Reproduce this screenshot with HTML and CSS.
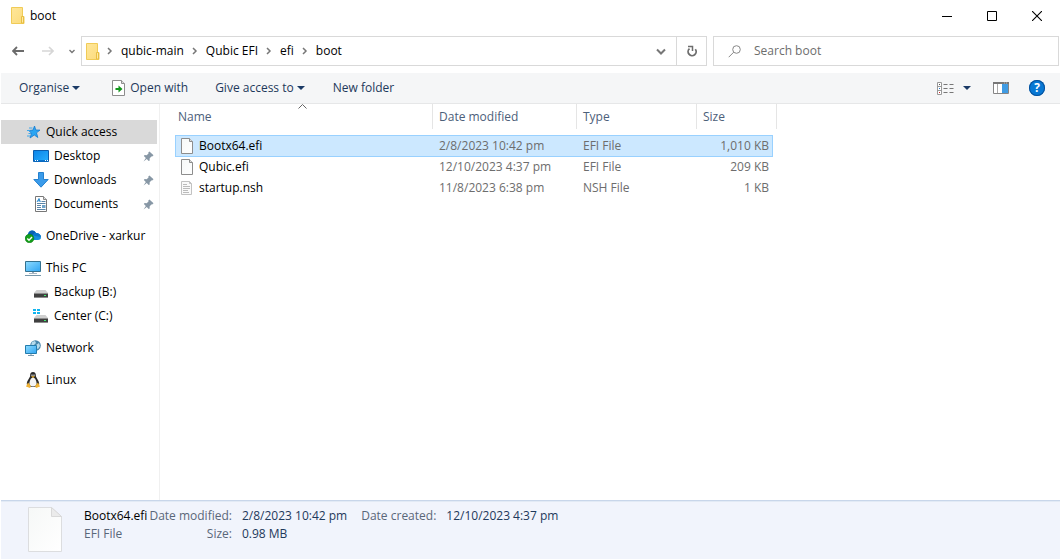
FILE: index.html
```html
<!DOCTYPE html>
<html lang="en">
<head>
<meta charset="utf-8">
<title>boot</title>
<link rel="stylesheet" href="styles.css">
</head>
<body>
<svg class="defs" aria-hidden="true">
  <defs>
    <linearGradient id="fold" x1="0" y1="0" x2="1" y2="1"><stop offset="0" stop-color="#ffe79a"/><stop offset="1" stop-color="#fbdb7c"/></linearGradient>
    <linearGradient id="blue" x1="0" y1="0" x2="1" y2="1"><stop offset="0" stop-color="#0b84e8"/><stop offset="1" stop-color="#27b0ff"/></linearGradient>
    <linearGradient id="screen" x1="0" y1="0" x2="1" y2="1"><stop offset="0" stop-color="#8fdcff"/><stop offset="1" stop-color="#2fa4f2"/></linearGradient>
    <linearGradient id="paper" x1="0" y1="0" x2="1" y2="1"><stop offset="0" stop-color="#f6f8f7"/><stop offset="1" stop-color="#fff"/></linearGradient>
    <symbol id="i-folder" viewBox="0 0 14 17"><path d="M.5.5h11v9h1.5v7H.5z" fill="url(#fold)" stroke="#f0cb57"/><path d="M10.500 16v-6.500h2V16z" fill="#ffe9a4" stroke="#e8bf42"/></symbol>
    <symbol id="i-chev" viewBox="0 0 6 8"><path d="M1 1l3 3-3 3" fill="none" stroke="#777" stroke-width="1.5"/></symbol>
    <symbol id="i-tri" viewBox="0 0 8 4"><path d="M0 0h8L4 4z" fill="#1b3a66"/></symbol>
    <symbol id="i-pin" viewBox="0 0 12 12"><path d="M7 .5L11.500 4.500 10 6 9 5.900 7.200 8.100 7.300 10.300 6.200 11 4.100 8.600.6 11.500 3.100 7.600.9 5.400 1.800 4.400 4 4.500 6 2.800 5.800 1.500z" fill="#8797a5"/></symbol>
    <symbol id="i-file" viewBox="0 0 12 16"><path d="M.5.5h8l3 3v12H.5z" fill="url(#paper)" stroke="#8d8d8d"/><path d="M8.500.5v3h3" fill="#ddd" stroke="#8d8d8d"/></symbol>
    <symbol id="i-drive" viewBox="0 0 14 8"><path d="M2.500 0h9L14 3H0z" fill="#cfcfcf"/><path d="M0 3h14v4H0z" fill="#404040"/><path d="M0 3h14v1H0zM0 7h14v1H0z" fill="#8d8d8d"/><path d="M10 5h2v1h-2z" fill="#3df06c"/></symbol>
  </defs>
</svg>
<div class="window">
  <header class="titlebar">
    <svg class="folder" width="14" height="17"><use href="#i-folder"/></svg>
    <h1 class="title">boot</h1>
    <button class="winbtn" aria-label="Minimise"><svg width="10" height="10"><path d="M0 5.500h10" stroke="#000"/></svg></button>
    <button class="winbtn" aria-label="Maximise"><svg width="10" height="10"><path d="M.5.5h9v9h-9z" fill="none" stroke="#000"/></svg></button>
    <button class="winbtn" aria-label="Close"><svg width="10" height="10"><path d="M0 0l10 10M10 0L0 10" stroke="#000" stroke-width="1.100"/></svg></button>
  </header>

  <div class="navbar">
    <button class="navbtn" aria-label="Back"><svg width="12" height="10"><path d="M5 1L1 5l4 4M1 5h11" fill="none" stroke="#6b6b6b" stroke-width="1.800"/></svg></button>
    <button class="navbtn" aria-label="Forward"><svg width="12" height="10"><path d="M7 1l4 4-4 4M11 5H0" fill="none" stroke="#d6d6d6" stroke-width="1.700"/></svg></button>
    <button class="recent" aria-label="Recent locations"><svg width="6" height="5"><path d="M.5 1L3 3.500 5.500 1" fill="none" stroke="#777" stroke-width="1.400"/></svg></button>
    <nav class="address" aria-label="Address">
      <svg class="folder" width="14" height="17"><use href="#i-folder"/></svg>
      <svg class="chev" width="6" height="8"><use href="#i-chev"/></svg><a href="#">qubic-main</a>
      <svg class="chev" width="6" height="8"><use href="#i-chev"/></svg><a href="#">Qubic EFI</a>
      <svg class="chev" width="6" height="8"><use href="#i-chev"/></svg><a href="#">efi</a>
      <svg class="chev" width="6" height="8"><use href="#i-chev"/></svg><a href="#">boot</a>
      <button class="drop" aria-label="Previous locations"><svg width="10" height="7"><path d="M1 1.500l4 4 4-4" fill="none" stroke="#777" stroke-width="2"/></svg></button>
      <button class="refresh" aria-label="Refresh"><svg width="10" height="12"><path d="M8.300 4.200A4 4 0 1 1 2.500 3.600" fill="none" stroke="#6d6d6d" stroke-width="1.800"/><path d="M1 1.500h4.500v4.500" fill="none" stroke="#6d6d6d" stroke-width="1.500"/></svg></button>
    </nav>
    <label class="search">
      <svg width="13" height="13"><circle cx="8.500" cy="4.500" r="3.800" fill="none" stroke="#888"/><path d="M5.700 7.200L.700 12.200" stroke="#888"/></svg>
      <input type="text" placeholder="Search boot" aria-label="Search boot">
    </label>
  </div>

  <div class="toolbar">
    <button class="organise">Organise <svg width="8" height="4"><use href="#i-tri"/></svg></button>
    <button class="openwith"><svg width="13" height="16"><path d="M.5.5h9l3 3v12H.5z" fill="#fff" stroke="#8d8d8d"/><path d="M9.500.5v3h3" fill="#ddd" stroke="#8d8d8d"/><path d="M3.500 8h3V5.500L10.500 9l-4 3.500V10h-3z" fill="#12961b"/></svg> Open with</button>
    <button class="access">Give access to <svg width="8" height="4"><use href="#i-tri"/></svg></button>
    <button class="newfolder">New folder</button>
    <span class="spacer"></span>
    <button class="view" aria-label="Change view"><svg width="17" height="13"><path d="M.5.5h4v12h-4zM.5 4.500h4M.5 8.500h4" fill="#fff" stroke="#999"/><path d="M2 2h1v1H2z" fill="#555"/><path d="M2 6h1v1H2z" fill="#2878c8"/><path d="M2 10h1v1H2z" fill="#d02020"/><path d="M6.500 2.500h4m2 0h4m-10 4h4m2 0h4m-10 4h4m2 0h4" stroke="#777"/></svg><svg width="8" height="4"><use href="#i-tri"/></svg></button>
    <button class="pane" aria-label="Preview pane"><svg width="16" height="12"><path d="M.5.5h15v11H.5z" fill="#fff" stroke="#858585"/><path d="M0 0h16v2H0z" fill="#777"/><path d="M11 1h1M13 1h1" stroke="#fff" stroke-width=".5"/><path d="M4.500 2v9" stroke="#aaa"/><path d="M9 2h6v9H9z" fill="#3f9be3"/></svg></button>
    <button class="help" aria-label="Help">?</button>
  </div>

  <main class="main">
    <nav class="side" aria-label="Folders">
      <ul class="group">
        <li class="item active"><svg width="16" height="14"><path d="M9.500 1l1.300 4 4.200.1-3.500 2.700 1.300 4.700-3.500-2.500-4.300 3 1.500-4.800L3.700 5.500l4.300-.4z" fill="#2aa5f2" stroke="#137bd2" stroke-width=".8"/><path d="M4 3h3.500M2 5.500h3M3.500 8.500h2.500M2 11h3" stroke="#3fa7ea"/></svg><a href="#">Quick access</a></li>
        <li class="item sub"><svg width="16" height="12"><path d="M.5.5h15v11H.5z" fill="url(#blue)" stroke="#0b5cac"/><path d="M1 10h14v1.500H1z" fill="#0873ce"/><path d="M2 10.500h1m1 0h1m7 0h1m1 0h1" stroke="#fff"/></svg><a href="#">Desktop</a><svg class="pin" width="11" height="11"><use href="#i-pin"/></svg></li>
        <li class="item sub"><svg width="16" height="16"><path d="M5.500.5h5v7h4.700L8 15.200.8 7.500h4.700z" fill="#3a9bea" stroke="#2581cf"/></svg><a href="#">Downloads</a><svg class="pin" width="11" height="11"><use href="#i-pin"/></svg></li>
        <li class="item sub"><svg width="16" height="16"><path d="M2.500.5h8l3 3v12h-11z" fill="#fff" stroke="#777"/><path d="M10.500.5v3h3" fill="#ddd" stroke="#888"/><path d="M4 6l2-3.500L7.300 6M5 4.800h2" fill="none" stroke="#2586cd"/><path d="M8.500 5.500h4M4 7.500h8.500m-8.500 2h4M4 11.500h4m-4 2h8.500" stroke="#5a84a8"/><path d="M9 9h3.500v3H9z" fill="#6fa3c9"/></svg><a href="#">Documents</a><svg class="pin" width="11" height="11"><use href="#i-pin"/></svg></li>
      </ul>
      <ul class="group">
        <li class="item"><svg width="16" height="14"><path d="M3 5.500C3.500 1 9 0 11 4c3 0 5 1.800 5 4s-1 3-3 3H3C-1 11 0 6 3 5.500z" fill="#1490df"/><path d="M3 5.500C3.500 1 9 0 11 4c-2 0-2 1-3.500 2.500C6 5.300 4.500 5 3 5.500z" fill="#0861b5"/><path d="M11 4c3 0 5 1.800 5 4L7.500 6.500C8.600 5 9.500 4 11 4z" fill="#0b76cb"/><circle cx="4.500" cy="9.500" r="4.300" fill="#15a01b" stroke="#08760e" stroke-width=".6"/><path d="M2.300 9.500l1.700 1.800 3-3.300" fill="none" stroke="#fff" stroke-width="1.400"/></svg><a href="#">OneDrive - xarkur</a></li>
      </ul>
      <ul class="group">
        <li class="item"><svg width="16" height="15"><path d="M.5.5h15v10H.5z" fill="url(#screen)" stroke="#33718f"/><path d="M7 11h2v1H7z" fill="#9ab"/><path d="M4 12.500h8" stroke="#a8b6c1"/><path d="M0 14.500h16" stroke="#7897aa"/></svg><a href="#">This PC</a></li>
        <li class="item sub"><svg width="16" height="14"><use href="#i-drive" x="1" y="5" width="14" height="8"/></svg><a href="#">Backup (B:)</a></li>
        <li class="item sub"><svg width="16" height="14"><use href="#i-drive" x="1" y="6" width="14" height="8"/><path d="M0 0h7v6H0z" fill="#fff"/><path d="M0 0h3v2H0zM4 0h3v2H4zM0 3h3v2H0zM4 3h3v2H4z" fill="#12b5ef"/></svg><a href="#">Center (C:)</a></li>
      </ul>
      <ul class="group">
        <li class="item"><svg width="16" height="16"><circle cx="10.500" cy="5.500" r="5.300" fill="#4887ad"/><path d="M7 2l3-1 1 2-2 2-3 1zM11 5l3-2 1 3-2 3-2-1z" fill="#b6dbec"/><path d="M.5 5.500h11v8H.5z" fill="url(#screen)" stroke="#237cad"/><path d="M6 14v1M3 15.500h6" stroke="#7897aa"/></svg><a href="#">Network</a></li>
      </ul>
      <ul class="group">
        <li class="item"><svg width="16" height="16"><path d="M8 0c2 0 3 1.500 2.900 4 .2 2 3.300 4.500 3.300 8 0 2-2 3-6.200 3s-6.200-1-6.200-3c0-3.500 3.100-6 3.300-8C5 1.500 6 0 8 0z" fill="#292929"/><path d="M8 5.500c2.300 0 3.600 4 3.600 6s-1.200 3-3.600 3-3.600-1-3.600-3 1.300-6 3.600-6z" fill="#f4f4f4"/><path d="M6.500 2.500h1v1.500h-1zM8.500 2.500h1v1.500h-1z" fill="#fff"/><path d="M6 4.300h4L8 6z" fill="#f5b427"/><path d="M3 10.500l3 3.500-1 1.900L1 14.500zM13 10.500l-3 3.500 1 1.900 4-1.400z" fill="#f0b234"/></svg><a href="#">Linux</a></li>
      </ul>
    </nav>

    <section class="content">
      <table class="files">
        <colgroup><col class="c-name"><col class="c-date"><col class="c-type"><col class="c-size"><col class="c-end"></colgroup>
        <thead>
          <tr>
            <th aria-sort="ascending"><div class="head">Name<svg class="sort" width="9" height="5"><path d="M.5 4.500l4-4 4 4" fill="none" stroke="#666"/></svg></div></th>
            <th><div class="head">Date modified</div></th>
            <th><div class="head">Type</div></th>
            <th colspan="2"><div class="head">Size</div></th>
          </tr>
        </thead>
        <tbody>
          <tr class="selected"><td><div class="name"><svg width="12" height="16"><use href="#i-file"/></svg>Bootx64.efi</div></td><td>2/8/2023 10:42 pm</td><td>EFI File</td><td class="size">1,010 KB</td></tr>
          <tr><td><div class="name"><svg width="12" height="16"><use href="#i-file"/></svg>Qubic.efi</div></td><td>12/10/2023 4:37 pm</td><td>EFI File</td><td class="size">209 KB</td></tr>
          <tr><td><div class="name"><svg width="12" height="16"><path d="M.5 1.500h8l2 2v11H.5z" fill="#fafafa" stroke="#c2c2c2"/><path d="M8.500 1.500v2h2" fill="none" stroke="#c2c2c2"/><path d="M2 4.500h4M2 6.500h7M2 8.500h7M2 10.500h5M2 12.500h6" stroke="#bbb"/></svg>startup.nsh</div></td><td>11/8/2023 6:38 pm</td><td>NSH File</td><td class="size">1 KB</td></tr>
        </tbody>
      </table>
    </section>
  </main>

  <footer class="details">
    <svg class="preview" width="34" height="45"><path d="M.5.5h23l10 9v35H.5z" fill="url(#paper)" stroke="#dcdddf"/><path d="M23.500.5v9h10z" fill="#ebebeb" stroke="#d9d9d9"/></svg>
    <div class="facts">
      <strong class="fname">Bootx64.efi</strong><span class="key">Date modified:</span><span class="val">2/8/2023 10:42 pm</span><span class="key">Date created:</span><span class="val">12/10/2023 4:37 pm</span>
      <span class="kind">EFI File</span><span class="key">Size:</span><span class="val">0.98 MB</span>
    </div>
  </footer>
</div>
</body>
</html>
```
FILE: styles.css
```css
* { box-sizing: border-box; }
body { margin: 0; background: #fff; color: #000; font: 12px/16px "Open Sans", "Noto Sans", sans-serif; }
svg { display: block; flex: none; }
button { display: flex; align-items: center; margin: 0; padding: 0; border: 0; background: none; color: inherit; font: inherit; white-space: nowrap; }
a { color: inherit; text-decoration: none; white-space: nowrap; }
ul { list-style: none; margin: 0; padding: 0; }
.defs { position: absolute; width: 0; height: 0; }
.window { display: flex; flex-direction: column; min-height: 100vh; padding: 0 1px 1px; }

.titlebar { display: flex; align-items: center; height: 31px; padding: 0 1px 0 10px; }
.title { flex: 1; margin: 0 0 0 5px; font-size: 12px; font-weight: 400; }
.winbtn { justify-content: center; width: 45px; height: 30px; }

.navbar { display: flex; align-items: center; height: 42px; padding: 0 1px 2px 0; }
.navbtn { justify-content: center; width: 30px; height: 30px; margin-left: 2px; }
.navbtn + .navbtn { margin-left: 0; }
.recent { justify-content: center; width: 18px; height: 30px; }
.address { display: flex; align-items: center; flex: 620 1 0; height: 30px; border: 1px solid #d9d9d9; padding-left: 4px; }
.address .chev { margin: 0 8px 0 7px; }
.address a + .chev { margin-left: 8px; }
.drop { justify-content: center; width: 30px; height: 28px; margin-left: auto; }
.refresh { justify-content: center; width: 30px; height: 28px; border-left: 1px solid #d9d9d9; }
.search { display: flex; align-items: center; flex: 330 1 0; height: 30px; margin-left: 6px; padding-left: 14px; border: 1px solid #d9d9d9; }
.search input { flex: 1; min-width: 0; margin-left: 13px; padding: 0; border: 0; outline: 0; background: none; font: inherit; }
.search input::placeholder { color: #6d6d6d; opacity: 1; }

.toolbar { display: flex; align-items: center; height: 31px; padding: 0 15px 0 18px; background: #f5f6f7; border-bottom: 1px solid #e6e7e8; color: #1e395b; }
.organise { gap: 3px; margin-right: 32px; }
.openwith { gap: 5px; margin-right: 27px; }
.access { gap: 3px; margin-right: 28px; }
.spacer { flex: 1; }
.view { gap: 9px; }
.pane { margin: 0 20px 0 22px; }
.help { justify-content: center; width: 16px; height: 16px; border-radius: 50%; background: #0878d4; color: #fff; font-weight: 700; box-shadow: inset 0 0 0 1px #06509b; }

.main { display: flex; flex: 1; }
.side { flex: none; width: 159px; padding-top: 16px; border-right: 1px solid #f0f0f0; }
.group { margin-bottom: 8px; }
.item { display: flex; align-items: center; height: 24px; margin-right: 2px; padding: 0 3px 0 24px; gap: 5px; }
.item.sub { padding-left: 32px; }
.item.active { background: #d9d9d9; }
.pin { margin-left: auto; }

.content { flex: 1; min-width: 0; padding-left: 15px; }
.files { border-spacing: 0; table-layout: fixed; width: 602px; }
.c-name { width: 258px; }
.c-date { width: 144px; }
.c-type { width: 120px; }
.c-size { width: 76px; }
.c-end { width: 4px; }
.files th { padding: 0 0 6px; font-weight: 400; text-align: left; color: #4c607a; }
.head { position: relative; height: 25px; padding: 5px 0 0 6px; border-right: 1px solid #e5e5e5; }
th:first-child .head { padding-left: 3px; }
.sort { position: absolute; top: 0; left: 50%; margin-left: -6px; }
.files td { height: 21px; padding: 0 0 2px 6px; color: #6d6d6d; white-space: nowrap; }
.files .selected td { height: 22px; padding-top: 0; padding-bottom: 0; background: #cce8ff; border: solid #99d1ff; border-width: 1px 0; }
.files .selected td:first-child { border-left-width: 1px; padding-left: 5px; }
.files .selected td:last-child { border-right-width: 1px; padding-right: 3px; }
.name { display: flex; align-items: center; gap: 6px; color: #000; }
.files td.size { padding-right: 4px; text-align: right; }

.details { display: flex; min-height: 59px; padding: 5px 27px 0; background: #f1f4fc; border-top: 1px solid #c8d6ea; box-shadow: inset 0 1px #e2eaf5; }
.preview { margin-top: 1px; }
.facts { display: grid; grid-template-columns: auto auto auto auto auto; justify-content: start; align-content: start; row-gap: 2px; margin: 2px 0 0 22px; white-space: nowrap; }
.fname { margin-right: 2px; font-weight: 400; }
.kind { color: #5a6779; }
.key { color: #5a6779; text-align: right; }
.val { margin: 0 14px 0 10px; color: #1e395b; }
```
